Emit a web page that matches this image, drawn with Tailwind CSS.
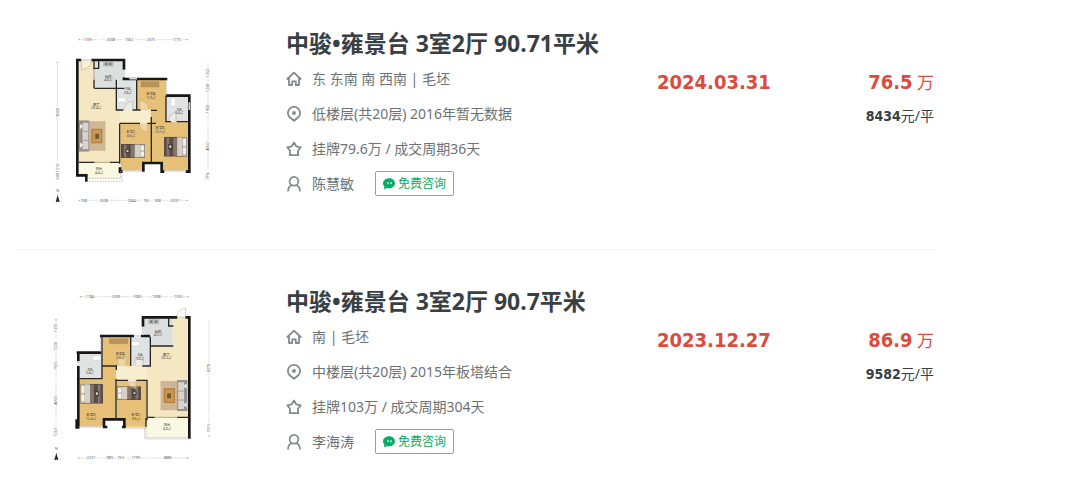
<!DOCTYPE html>
<html lang="zh-CN">
<head>
  <meta charset="UTF-8">
  <meta name="viewport" content="width=device-width, initial-scale=1.0">
  <title>中骏•雍景台 成交记录</title>
  <script src="https://cdn.jsdelivr.net/npm/@tailwindcss/browser@4"></script>
</head>
<body class="bg-white font-['Noto_Sans','Noto_Sans_CJK_SC',sans-serif] text-[#6c7275]">
  <!-- shared icons and furniture -->
  <svg class="absolute size-0">
    <symbol id="icon-home" viewBox="0 0 16 16">
      <path d="M1.300 8 8 1.600 14.700 8M3 6.600V14h3.200v-3.600h3.600V14H13V6.600" fill="none" stroke="currentColor" stroke-width="1.800" stroke-linejoin="round" stroke-linecap="round" />
    </symbol>
    <symbol id="icon-pin" viewBox="0 0 16 16">
      <path d="M8 14.800 3.400 11a6.100 6.100 0 1 1 9.200 0Z" fill="none" stroke="currentColor" stroke-width="1.800" stroke-linejoin="round" />
      <circle cx="8" cy="7" r="1.900" fill="currentColor" />
    </symbol>
    <symbol id="icon-star" viewBox="0 0 16 16">
      <path d="m8 1.500 2.200 3.800 4.500 1-2.700 3.500.2 4.400H3.800L4 9.800 1.300 6.300l4.500-1Z" fill="none" stroke="currentColor" stroke-width="1.800" stroke-linejoin="round" />
    </symbol>
    <symbol id="icon-user" viewBox="0 0 16 16">
      <circle cx="8" cy="5.300" r="4.400" fill="none" stroke="currentColor" stroke-width="1.700" />
      <path d="M5.600 9C3.200 10.200 2 12.300 2 15.600M10.400 9C12.800 10.200 14 12.300 14 15.600" fill="none" stroke="currentColor" stroke-width="1.700" />
    </symbol>
    <symbol id="icon-chat" viewBox="0 0 12 12">
      <path d="M6.200.3c3.200 0 5.800 2.200 5.800 5s-2.600 5.100-5.800 5.100c-.7 0-1.400-.1-2-.3L1 11.300l.4-2.700C.5 7.700 0 6.600 0 5.300c0-2.800 3-5 6.200-5Z" fill="currentColor" />
      <path d="M5 4.500v1.200M8 4.500v1.200" stroke="#fff" stroke-width="1.200" stroke-linecap="round" />
    </symbol>
    <symbol id="bed" viewBox="0 0 70 60" preserveAspectRatio="none">
      <path d="M0 0h70v60H0z" fill="#5b4b43" />
      <path d="M8 3h8v54H8zM28 3h12v54H28z" fill="#83766e" />
      <path d="M40 2h16v56H40z" fill="#d6cfc6" />
      <path d="M56 2h13v56H56z" fill="#c4bdb5" />
      <path d="M57 7h10v20H57zM57 33h10v20H57z" fill="#f2eeea" />
      <path d="M13 23h12v15H13z" fill="#3c3737" />
      <path d="M16 26h6v8h-6z" fill="#d8d2ca" />
    </symbol>
    <symbol id="sofa" viewBox="0 0 80 94" preserveAspectRatio="none">
      <path d="M24 3h56v88H24z" fill="#cdb797" />
      <path d="M0 0h31v94H0z" fill="#99908b" />
      <path d="M10 7h18v80H10z" fill="#d8d3cf" />
      <path d="M11 33h17M11 60h17M8 6v82" stroke="#8b817d" stroke-width="2" />
      <path d="m3 10 9 8-9 9zm0 56 9 8-9 9z" fill="#f0eeec" />
      <path d="M37 25h33v44H37z" fill="#b77d39" />
      <path d="M41 29h25v36H41z" fill="#ca9755" />
      <path d="M49 40h11v15H49z" fill="#71563a" />
    </symbol>
    <symbol id="compass" viewBox="0 0 30 30">
      <circle cx="15" cy="15" r="14" fill="#fff" stroke="#ccc" />
      <path d="m15 2 7 26-7-6-7 6Z" fill="#222" />
    </symbol>
    <marker id="dot" markerWidth="6" markerHeight="6" refX="3" refY="3" markerUnits="userSpaceOnUse">
      <circle cx="3" cy="3" r="2" fill="#999" />
    </marker>
    <pattern id="wood" width="28" height="22" patternUnits="userSpaceOnUse">
      <path d="M0 0h28v22H0z" fill="#e8c179" />
      <path d="M0 5h28M0 16h28M9 5v11" stroke="#e0b568" />
    </pattern>
    <pattern id="tile" width="30" height="30" patternUnits="userSpaceOnUse">
      <path d="M0 0h30v30H0z" fill="#f4e7c2" />
      <path d="M0 0h30M0 0v30" stroke="#f0e1b8" />
    </pattern>
  </svg>

  <ul class="pl-4 pr-36">
    <li class="grid grid-cols-[246px_1fr_160px_117px] border-b border-[#f3f3f3] pt-[26px] pr-0.5 pb-[47px] pl-6">
      <a href="#" aria-label="户型图">
        <svg class="h-[176px] w-[190px]" viewBox="0 3 570 528">
          <!-- rooms -->
          <path d="M113 106h136v150h84v40h-93v118H113z" fill="url(#tile)" />
          <path d="M165 108h86v80h-86z" fill="#dcdfe0" />
          <path d="M230 164h60v90h-60z" fill="#dfe3e4" />
          <path d="M290 164h88v90h-88zM333 254h45v36h67v148h-80v-28h-51v28h-73V296h92z" fill="url(#wood)" />
          <path d="M378 214h68v76h-68z" fill="#dfe3e4" />
          <path d="M240 256h90v36h-90z" fill="#f8edcc" />
          <path d="M117 413h125v48H142v-12h-25z" fill="#faf8df" />
          <!-- furniture -->
          <use href="#sofa" x="117" y="286" width="80" height="94" />
          <use href="#bed" x="243" y="357" width="72" height="42" />
          <use href="#bed" x="372" y="335" width="69" height="60" />
          <path d="M303 170h54v16h-54z" fill="#b79457" stroke="#a78144" />
          <path d="M191 111h28v12h-28z" fill="#b9bec0" stroke="#888" />
          <circle cx="199" cy="117" r="4" fill="#777" /><circle cx="211" cy="117" r="4" fill="#777" />
          <path d="M233 218h24v13h-24zM393 219h13v24h-13z" fill="#fff" stroke="#bbb" />
          <!-- doors -->
          <path d="M124 108v26q26-2 31-26M278 253v-24q-22 2-26 24M325 252q0-24-26-25v25M408 287v-25q-20 4-22 25M298 297q2 20 25 24v-24" fill="#fff" fill-opacity=".35" stroke="#c6b48c" stroke-width="2" />
          <!-- walls -->
          <path d="M112 102v349h27v19M108 105h16M154 105h101M252 102v32M252 157v9M253 162h129M448 208v234M378 212h74M310 440v-26h55v26h8M240 427v13h8M437 440h15" fill="none" stroke="#171717" stroke-width="8" />
          <path d="M162 108v82M176 107v23h-13M163 190h91M229 164v91h21M290 163v92M278 255h24M378 212v78h15M410 290h38M239 296v120M239 295h61M322 295h26M334 276v136M117 412h47M209 412h32M333 256h18" fill="none" stroke="#292725" stroke-width="4" />
          <path d="M162 133v31M252 134v23M448 232v23M268 161h23M124 105h30M248 438h58M376 438h61" stroke="#d8d8d8" stroke-width="5" />
          <path d="M163 412h46" stroke="#b9a57b" stroke-width="3" />
          <path d="M380 164v46M140 460h102v-22M140 469h106v-30" fill="none" stroke="#aaa" stroke-width="2" stroke-dasharray="5 3" />
          <!-- room names -->
          <g font-size="10" text-anchor="middle" fill="#433e36">
            <text x="169" y="242">客厅</text><text x="169" y="253">26.4㎡</text>
            <text x="205" y="158">厨房</text><text x="205" y="169">4.6㎡</text>
            <text x="263" y="195">卫A</text><text x="263" y="206">3.8㎡</text>
            <text x="333" y="210">卧室A</text><text x="333" y="221">5.9㎡</text>
            <text x="417" y="257">卫B</text><text x="417" y="268">3.4㎡</text>
            <text x="273" y="325">卧室C</text><text x="273" y="336">8.6㎡</text>
            <text x="360" y="312">卧室B</text><text x="360" y="323">12.7㎡</text>
            <text x="177" y="435">阳台</text><text x="177" y="446">4.4㎡</text>
          </g>
          <!-- dimensions -->
          <g fill="none" stroke="#aaa" stroke-width="1">
            <path d="M118 44h14M156 44h16M180 44h18M226 44h22M284 44h32M350 44h26M378 44h18M424 44h18" marker-start="url(#dot)" marker-end="url(#dot)" />
            <path d="M118 526h5M146 526h30M206 526h36M244 526h18M288 526h18M332 526h8M366 526h26M416 526h26" marker-start="url(#dot)" marker-end="url(#dot)" />
            <path d="M52 112v134M52 278v132M52 412v8M504 112v18M504 157v16M504 203v36M504 265v25M504 295v55M504 380v52M504 436v9" marker-start="url(#dot)" marker-end="url(#dot)" />
          </g>
          <g font-size="11" text-anchor="middle" fill="#555">
            <text x="144" y="48">1595</text><text x="212" y="48">2008</text><text x="267" y="48">1062</text><text x="333" y="48">2375</text><text x="410" y="48">1775</text>
            <text x="132" y="530">768</text><text x="191" y="530">2658</text><text x="275" y="530">1844</text><text x="319" y="530">735</text><text x="353" y="530">938</text><text x="404" y="530">2097</text>
            <text transform="translate(56 262) rotate(-90)">8050</text><text transform="translate(56 440) rotate(-90)">600 1215</text>
            <text transform="translate(508 144) rotate(-90)">1352</text><text transform="translate(508 189) rotate(-90)">1230</text><text transform="translate(508 252) rotate(-90)">1950</text><text transform="translate(508 365) rotate(-90)">4050</text><text transform="translate(508 454) rotate(-90)">775</text>
            <text x="53" y="502">N</text>
          </g>
          <use href="#compass" x="38" y="508" width="30" height="30" transform="translate(0 -1)" />
        </svg>
      </a>
      <div class="text-sm">
        <h2 class="text-[23px] leading-[35px] font-bold whitespace-nowrap text-[#394043]"><a href="#">中骏•雍景台 3室2厅 90.71平米</a></h2>
        <div class="flex h-[35px] items-center gap-2.5"><svg class="size-4 text-[#85898c]"><use href="#icon-home" /></svg>东 东南 南 西南 | 毛坯</div>
        <div class="flex h-[35px] items-center gap-2.5"><svg class="size-4 text-[#85898c]"><use href="#icon-pin" /></svg>低楼层(共20层) 2016年暂无数据</div>
        <div class="flex h-[35px] items-center gap-2.5"><svg class="size-4 text-[#85898c]"><use href="#icon-star" /></svg>挂牌79.6万 / 成交周期36天</div>
        <div class="flex h-[35px] items-center gap-2.5">
          <svg class="size-4 text-[#85898c]"><use href="#icon-user" /></svg>
          <a href="#">陈慧敏</a>
          <button type="button" class="ml-[11px] flex h-[25px] items-center gap-[3px] rounded-xs border border-[#50c799] px-[7px] text-xs text-[#00ae66]"><svg class="size-3"><use href="#icon-chat" /></svg>免费咨询</button>
        </div>
      </div>
      <div class="pt-[39px] font-['DejaVu_Sans_Condensed','DejaVu_Sans',sans-serif] text-xl leading-[34px] font-bold text-[#db4c3f]">2024.03.31</div>
      <div class="pt-[39px] text-right text-[#394043]">
        <div class="text-[17px] leading-[34px] text-[#db4c3f]"><b class="font-['DejaVu_Sans_Condensed','DejaVu_Sans',sans-serif] text-xl leading-[34px]">76.5</b> 万</div>
        <div class="text-sm leading-8"><b class="font-['DejaVu_Sans_Condensed','DejaVu_Sans',sans-serif]">8434</b>元/平</div>
      </div>
    </li>

    <li class="grid grid-cols-[246px_1fr_160px_117px] pt-[34px] pr-0.5 pl-6">
      <a href="#" aria-label="户型图">
        <svg class="h-[176px] w-[190px]" viewBox="0 -3 570 528">
          <!-- rooms -->
          <path d="M398 98h48v300H320V285h-92v-42h102v-60h68z" fill="url(#tile)" />
          <path d="M312 99h86v84h-86z" fill="#dcdfe0" />
          <path d="M273 157h56v86h-56zM119 206h67v76h-67z" fill="#dfe3e4" />
          <path d="M187 157h84v86h-84zM118 282h68v-39h42v160h-36v22h-74zM229 287h90v138h-66v-22h-24z" fill="url(#wood)" />
          <path d="M229 245h92v38h-92z" fill="#f8edcc" />
          <path d="M319 398h128v61H319z" fill="#fafae4" />
          <!-- furniture -->
          <use href="#sofa" transform="translate(443 285) scale(-1 1)" width="82" height="94" />
          <use href="#bed" transform="translate(189 296) scale(-1 1)" width="68" height="60" />
          <use href="#bed" transform="translate(303 304) scale(-1 1)" width="72" height="41" />
          <path d="M208 161h55v15h-55z" fill="#b79457" stroke="#a78144" />
          <path d="M326 104h30v12h-30z" fill="#b9bec0" stroke="#888" />
          <circle cx="334" cy="110" r="4" fill="#777" /><circle cx="348" cy="110" r="4" fill="#777" />
          <path d="M274 170h24v12h-24zM158 213h24v13h-24z" fill="#fff" stroke="#bbb" />
          <!-- doors -->
          <path d="M436 97V69q-23 4-26 26M285 242v-25h24v25M234 242v-25h24v25M132 282v17M263 287q2 20 25 24v-24" fill="#fff" fill-opacity=".35" stroke="#c6b48c" stroke-width="2" />
          <!-- walls -->
          <path d="M305 97h107M436 97h16M448 94v97M448 191v270M309 94v31M309 149v7M180 153h102M303 153h27M110 203h74M115 200v29M115 243v187M110 403v24h8M192 430v-27h61v27M190 426h12M246 426h12" fill="none" stroke="#171717" stroke-width="8" />
          <path d="M386 99v24h14M331 155v88h-24M330 183h70M272 155v88M186 155v86M186 205v76h-68M186 243h43v12M228 282v122M230 286h34M289 286h32v120M320 397h24M411 397h35M318 399v27" fill="none" stroke="#292725" stroke-width="4" />
          <path d="M412 97h24M309 125v24M282 153h21M115 229v14M119 426h70M257 429h62" stroke="#d8d8d8" stroke-width="5" />
          <path d="M344 397h65" stroke="#b9a57b" stroke-width="3" />
          <path d="M181 158v42M318 428v30h128M314 430v32h133" fill="none" stroke="#aaa" stroke-width="2" stroke-dasharray="5 3" />
          <!-- room names -->
          <g font-size="10" text-anchor="middle" fill="#433e36">
            <text x="379" y="212">客厅</text><text x="379" y="223">26.2㎡</text>
            <text x="354" y="143">厨房</text><text x="354" y="154">4.5㎡</text>
            <text x="299" y="214">卫A</text><text x="299" y="225">3.8㎡</text>
            <text x="241" y="211">卧室A</text><text x="241" y="222">5.6㎡</text>
            <text x="149" y="257">卫B</text><text x="149" y="268">3.4㎡</text>
            <text x="153" y="393">卧室B</text><text x="153" y="404">12.4㎡</text>
            <text x="288" y="393">卧室C</text><text x="288" y="404">8.6㎡</text>
            <text x="381" y="424">阳台</text><text x="381" y="435">4.8㎡</text>
          </g>
          <!-- dimensions -->
          <g fill="none" stroke="#aaa" stroke-width="1">
            <path d="M121 35h17M162 35h19M186 35h30M240 35h28M272 35h8M304 35h8M316 35h20M362 35h22M388 35h14M428 35h16" marker-start="url(#dot)" marker-end="url(#dot)" />
            <path d="M116 519h25M166 519h24M192 519h7M219 519h13M252 519h6M260 519h14M300 519h18M322 519h47M395 519h48" marker-start="url(#dot)" marker-end="url(#dot)" />
            <path d="M48 104v12M48 142v18M48 198v32M48 254v26M48 284v50M48 360v48M48 412v18M507 104v130M507 264v126M507 394v20M507 446v8" marker-start="url(#dot)" marker-end="url(#dot)" />
          </g>
          <g font-size="11" text-anchor="middle" fill="#555">
            <text x="150" y="39">1784</text><text x="228" y="39">2339</text><text x="292" y="39">1085</text><text x="349" y="39">1998</text><text x="415" y="39">1592</text>
            <text x="153" y="523">2227</text><text x="209" y="523">989</text><text x="242" y="523">753</text><text x="287" y="523">1799</text><text x="382" y="523">3886</text>
            <text transform="translate(52 129) rotate(-90)">1372</text><text transform="translate(52 184) rotate(-90)">1220</text><text transform="translate(52 242) rotate(-90)">1925</text><text transform="translate(52 347) rotate(-90)">4050</text><text transform="translate(52 442) rotate(-90)">1257</text>
            <text transform="translate(511 249) rotate(-90)">8270</text><text transform="translate(511 430) rotate(-90)">1515</text>
            <text x="49" y="495">N</text>
          </g>
          <use href="#compass" x="34" y="501" width="30" height="30" />
        </svg>
      </a>
      <div class="text-sm">
        <h2 class="text-[23px] leading-[35px] font-bold whitespace-nowrap text-[#394043]"><a href="#">中骏•雍景台 3室2厅 90.7平米</a></h2>
        <div class="flex h-[35px] items-center gap-2.5"><svg class="size-4 text-[#85898c]"><use href="#icon-home" /></svg>南 | 毛坯</div>
        <div class="flex h-[35px] items-center gap-2.5"><svg class="size-4 text-[#85898c]"><use href="#icon-pin" /></svg>中楼层(共20层) 2015年板塔结合</div>
        <div class="flex h-[35px] items-center gap-2.5"><svg class="size-4 text-[#85898c]"><use href="#icon-star" /></svg>挂牌103万 / 成交周期304天</div>
        <div class="flex h-[35px] items-center gap-2.5">
          <svg class="size-4 text-[#85898c]"><use href="#icon-user" /></svg>
          <a href="#">李海涛</a>
          <button type="button" class="ml-[11px] flex h-[25px] items-center gap-[3px] rounded-xs border border-[#50c799] px-[7px] text-xs text-[#00ae66]"><svg class="size-3"><use href="#icon-chat" /></svg>免费咨询</button>
        </div>
      </div>
      <div class="pt-[39px] font-['DejaVu_Sans_Condensed','DejaVu_Sans',sans-serif] text-xl leading-[34px] font-bold text-[#db4c3f]">2023.12.27</div>
      <div class="pt-[39px] text-right text-[#394043]">
        <div class="text-[17px] leading-[34px] text-[#db4c3f]"><b class="font-['DejaVu_Sans_Condensed','DejaVu_Sans',sans-serif] text-xl leading-[34px]">86.9</b> 万</div>
        <div class="text-sm leading-8"><b class="font-['DejaVu_Sans_Condensed','DejaVu_Sans',sans-serif]">9582</b>元/平</div>
      </div>
    </li>
  </ul>
</body>
</html>
